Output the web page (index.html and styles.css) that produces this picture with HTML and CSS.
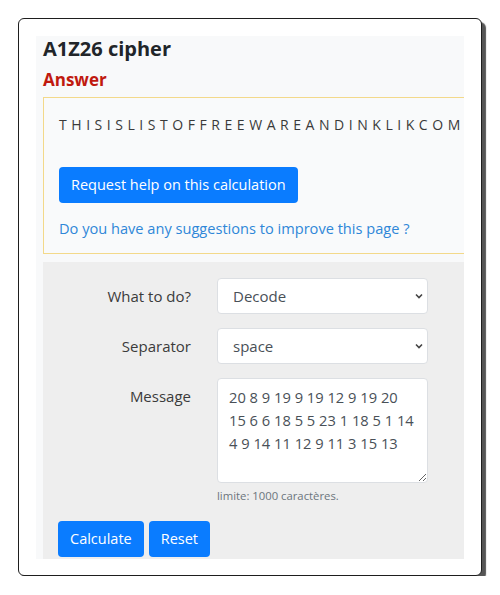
FILE: index.html
```html
<!DOCTYPE html>
<html lang="en">
<head>
<meta charset="utf-8">
<title>A1Z26 cipher</title>
<link rel="stylesheet" href="styles.css">
</head>
<body>
<div class="frame">
  <div class="inner">
    <h1 class="title">A1Z26 cipher</h1>
    <h2 class="answer-title">Answer</h2>
    <div class="answer-box">
      <p class="result">THISISLISTOFFREEWAREANDINKLIKCOM</p>
      <button class="btn btn-help" type="button">Request help on this calculation</button>
      <p class="suggest"><a href="#">Do you have any suggestions to improve this page ?</a></p>
    </div>
    <form class="calc-form">
      <div class="form-grid">
        <label class="lbl" for="todo">What to do?</label>
        <div class="field">
          <select id="todo" class="ctrl select"><option>Decode</option></select>
        </div>
        <label class="lbl" for="sep">Separator</label>
        <div class="field">
          <select id="sep" class="ctrl select"><option>space</option></select>
        </div>
        <label class="lbl" for="msg">Message</label>
        <div class="field">
          <textarea id="msg" class="ctrl textarea">20 8 9 19 9 19 12 9 19 20
15 6 6 18 5 5 23 1 18 5 1 14
4 9 14 11 12 9 11 3 15 13</textarea>
          <small class="hint">limite: 1000 caractères.</small>
        </div>
      </div>
      <div class="actions">
        <button class="btn" type="button">Calculate</button>
        <button class="btn" type="button">Reset</button>
      </div>
    </form>
  </div>
</div>
</body>
</html>
```
FILE: styles.css
```css
* { box-sizing: border-box; }
html, body { margin: 0; padding: 0; background: #ffffff; }
body {
  font-family: "Open Sans", "Noto Sans", "Liberation Sans", sans-serif;
  color: #212529;
}
.frame {
  margin: 18px 0 0 18px;
  width: 464px;
  height: 558px;
  border: 1px solid #1e1e1e;
  border-radius: 6px;
  box-shadow: 4px 4px 1px #555555;
  padding: 17px;
  background: #fff;
}
.inner {
  background: #f8f9fa;
  height: 523px;
  overflow: hidden;
  padding: 1px 0 0 7px;
}
.title {
  margin: 0;
  font-size: 20px;
  line-height: 24px;
  font-weight: 700;
  color: #212529;
}
.answer-title {
  margin: 8px 0 0;
  font-size: 17px;
  line-height: 22px;
  font-weight: 700;
  color: #c0190f;
}
.answer-box {
  margin-top: 6px;
  width: 440px;
  border: 1px solid #f3d98a;
  background: #f9fafb;
  padding: 15px 15px 13px;
}
.result {
  margin: 0 0 30px;
  font-size: 14px;
  line-height: 24px;
  letter-spacing: 4.55px;
  color: #3a3a3a;
  white-space: nowrap;
}
.btn {
  display: inline-block;
  font-family: inherit;
  font-size: 14.5px;
  line-height: 24px;
  padding: 6px 12px;
  border: 0;
  border-radius: 4px;
  background: #0a7cff;
  color: #ffffff;
  height: 36px;
}
.suggest {
  margin: 13px 0 0;
  font-size: 14.6px;
  line-height: 24px;
}
.suggest a {
  color: #2f87d8;
  text-decoration: none;
}
.calc-form {
  margin-top: 8px;
  width: 440px;
  background: #eeeeee;
  padding: 16px 15px 20px;
  min-height: 300px;
}
.form-grid {
  display: grid;
  grid-template-columns: 133px 211px;
  column-gap: 26px;
  row-gap: 14px;
}
.lbl {
  text-align: right;
  font-size: 15px;
  line-height: 36px;
  color: #3b3b3b;
}
.field { display: flex; flex-direction: column; }
.ctrl {
  font-family: inherit;
  font-size: 15px;
  color: #495057;
  background-color: #ffffff;
  border: 1px solid #dcdfe3;
  border-radius: 4px;
  width: 211px;
}
.select {
  appearance: none;
  -webkit-appearance: none;
  height: 36px;
  padding: 0 28px 0 15px;
  line-height: 34px;
  background-image: url("data:image/svg+xml,%3Csvg xmlns='http://www.w3.org/2000/svg' width='8' height='6' viewBox='0 0 8 6'%3E%3Cpath d='M1 1.5 L4 4.5 L7 1.5' fill='none' stroke='%23444' stroke-width='1.6'/%3E%3C/svg%3E");
  background-repeat: no-repeat;
  background-position: right 4px center;
  background-size: 8px 6px;
}
.textarea {
  height: 105px;
  padding: 7px 8px 6px 11px;
  font-size: 14.7px;
  line-height: 23px;
  resize: vertical;
  display: block;
  white-space: pre-wrap;
}
.hint {
  margin-top: 4px;
  font-size: 11.3px;
  line-height: 18px;
  color: #6c757d;
}
.actions {
  margin-top: 16px;
  display: flex;
  gap: 5px;
}
```
